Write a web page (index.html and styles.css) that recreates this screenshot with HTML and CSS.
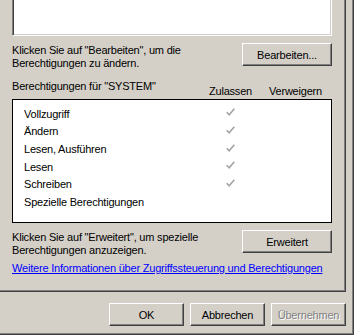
FILE: index.html
```html
<!DOCTYPE html>
<html lang="de">
<head>
    <meta charset="UTF-8">
    <meta name="viewport" content="width=device-width, initial-scale=1.0">
    <title>Sicherheit</title>
    <link rel="stylesheet" href="styles.css">
</head>
<body>
    <div class="window">
        <div class="tab-page">
            <div class="group-list"></div>

            <div class="action-row">
                <p class="hint">Klicken Sie auf "Bearbeiten", um die<br>Berechtigungen zu ändern.</p>
                <button class="btn btn-wide">Bearbeiten...</button>
            </div>

            <div class="perm-header">
                <span class="perm-title">Berechtigungen für "SYSTEM"</span>
                <span class="perm-col">Zulassen</span>
                <span class="perm-col">Verweigern</span>
            </div>

            <ul class="perm-list">
                <li class="perm-row">
                    <span>Vollzugriff</span>
                    <span class="check"><svg width="9" height="8" viewBox="0 0 9 8"><path d="M0.7 4.2 L3.2 6.8 L8.3 0.8" /></svg></span>
                    <span></span>
                </li>
                <li class="perm-row">
                    <span>Ändern</span>
                    <span class="check"><svg width="9" height="8" viewBox="0 0 9 8"><path d="M0.7 4.2 L3.2 6.8 L8.3 0.8" /></svg></span>
                    <span></span>
                </li>
                <li class="perm-row">
                    <span>Lesen, Ausführen</span>
                    <span class="check"><svg width="9" height="8" viewBox="0 0 9 8"><path d="M0.7 4.2 L3.2 6.8 L8.3 0.8" /></svg></span>
                    <span></span>
                </li>
                <li class="perm-row">
                    <span>Lesen</span>
                    <span class="check"><svg width="9" height="8" viewBox="0 0 9 8"><path d="M0.7 4.2 L3.2 6.8 L8.3 0.8" /></svg></span>
                    <span></span>
                </li>
                <li class="perm-row">
                    <span>Schreiben</span>
                    <span class="check"><svg width="9" height="8" viewBox="0 0 9 8"><path d="M0.7 4.2 L3.2 6.8 L8.3 0.8" /></svg></span>
                    <span></span>
                </li>
                <li class="perm-row">
                    <span>Spezielle Berechtigungen</span>
                    <span></span>
                    <span></span>
                </li>
            </ul>

            <div class="action-row">
                <p class="hint">Klicken Sie auf "Erweitert", um spezielle<br>Berechtigungen anzuzeigen.</p>
                <button class="btn btn-wide">Erweitert</button>
            </div>

            <a href="#" class="info-link">Weitere Informationen über Zugriffssteuerung und Berechtigungen</a>
        </div>

        <div class="dialog-buttons">
            <button class="btn">OK</button>
            <button class="btn">Abbrechen</button>
            <button class="btn" disabled>Übernehmen</button>
        </div>
    </div>
</body>
</html>
```

FILE: styles.css
```css
:root {
    --face: #d4d0c8;
    --shadow: #808080;
    --dark: #404040;
    --light: #ffffff;
}

body {
    margin: 0;
    background-color: var(--face);
    font-family: 'Liberation Sans', Arial, sans-serif;
    font-size: 11px;
    letter-spacing: -0.2px;
    color: #000;
}

.window {
    width: 354px;
    height: 335px;
    box-sizing: border-box;
    padding-right: 7px;
    border-right: 1px solid var(--dark);
    border-bottom: 1px solid var(--dark);
    box-shadow: inset -1px -1px var(--shadow);
}

.tab-page {
    height: 292px;
    box-sizing: border-box;
    padding: 0 13px 0 12px;
    border-right: 1px solid var(--dark);
    border-bottom: 1px solid var(--dark);
    box-shadow: inset -1px -1px var(--shadow);
}

/* oberes Listenfeld (Gruppen- und Benutzernamen) */
.group-list {
    height: 36px;
    box-sizing: border-box;
    background-color: #fff;
    border-left: 1px solid var(--shadow);
    border-right: 1px solid var(--light);
    border-bottom: 1px solid var(--light);
    box-shadow: inset 1px 0 var(--dark), inset -1px -1px var(--face);
}

.action-row {
    display: flex;
    justify-content: space-between;
    align-items: flex-start;
    margin-top: 7px;
}

.hint {
    margin: 1px 0 0;
    line-height: 13px;
}

.btn {
    width: 75px;
    height: 23px;
    padding: 0;
    font-family: inherit;
    font-size: 11px;
    letter-spacing: inherit;
    color: #000;
    background-color: var(--face);
    border: 1px solid;
    border-color: var(--light) var(--dark) var(--dark) var(--light);
    box-shadow: inset -1px -1px var(--shadow);
}

.btn-wide {
    width: 90px;
}

.btn:disabled {
    color: var(--shadow);
    text-shadow: 1px 1px var(--light);
}

.perm-header {
    display: flex;
    align-items: flex-start;
    margin-top: 10px;
    padding-right: 4px;
    line-height: 13px;
}

.perm-title {
    flex: 1;
}

.perm-col {
    width: 65px;
    margin-top: 5px;
    text-align: center;
}

.perm-list {
    list-style: none;
    margin: 1px 0 0;
    padding: 5px 0 0;
    height: 124px;
    box-sizing: border-box;
    background-color: #fff;
    border: 1px solid #000;
}

.perm-row {
    display: grid;
    grid-template-columns: 1fr 65px 65px;
    align-items: center;
    height: 17.67px;
    padding: 0 3px 0 11px;
}

.check {
    display: flex;
    justify-content: center;
    margin-top: -3px;
}

.check path {
    fill: none;
    stroke: #a4a4a4;
    stroke-width: 1.6;
}

.info-link {
    display: block;
    margin-top: 5px;
    line-height: 13px;
    white-space: nowrap;
    color: #0000ff;
    text-decoration: underline;
}

.dialog-buttons {
    display: flex;
    justify-content: flex-end;
    gap: 6px;
    margin-top: 11px;
}
```
